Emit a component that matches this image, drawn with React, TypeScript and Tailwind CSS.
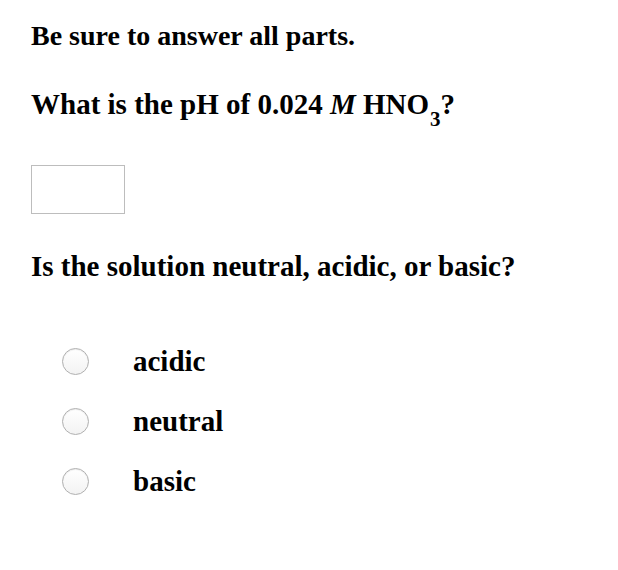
import React, { useState } from 'react';

const options = ['acidic', 'neutral', 'basic'];

export default function App() {
    const [ph, setPh] = useState('');
    const [choice, setChoice] = useState<string | null>(null);

    return (
        <div className="w-[618px] h-[570px] bg-white text-black font-['Liberation_Serif',serif] font-bold text-[28px] leading-none pl-[31px] pt-[22px]">
            <p className="h-[28px]">Be sure to answer all parts.</p>

            <p className="mt-[40px] h-[29px] text-[29px]">
                What is the pH of 0.024 <i>M</i> HNO<sub className="text-[21px] align-[-7px] ml-[1px]">3</sub>?
            </p>

            <input
                type="text"
                value={ph}
                onChange={(e) => setPh(e.target.value)}
                className="block mt-[46px] w-[94px] h-[49px] border border-[#bdbdbd] outline-none px-1 text-[18px] font-normal"
            />

            <p className="mt-[38px] h-[29px] text-[29px]">Is the solution neutral, acidic, or basic?</p>

            {/* Options */}
            <div className="mt-[66px] flex flex-col gap-[31px] text-[29px]">
                {options.map(opt => (
                    <label key={opt} className="flex items-center h-[29px] cursor-pointer">
                        <span
                            onClick={() => setChoice(opt)}
                            className="ml-[31px] w-[27px] h-[27px] rounded-full border border-[#b0b0b0] bg-gradient-to-b from-white to-[#f3f3f3] shadow-[inset_0_1px_1px_rgba(0,0,0,0.08)] flex items-center justify-center"
                        >
                            {choice === opt && <span className="w-[11px] h-[11px] rounded-full bg-[#333]" />}
                        </span>
                        <span className="ml-[44px]" onClick={() => setChoice(opt)}>{opt}</span>
                    </label>
                ))}
            </div>
        </div>
    );
}
